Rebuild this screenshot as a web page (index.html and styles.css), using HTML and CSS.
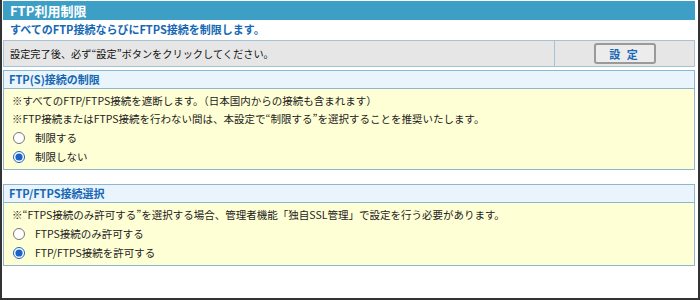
FILE: index.html
```html
<!DOCTYPE html>
<html lang="ja">
<head>
    <meta charset="UTF-8">
    <title>FTP利用制限</title>
    <link rel="stylesheet" href="styles.css">
</head>
<body>
    <div class="frame">
        <div class="page-title">FTP利用制限</div>
        <div class="lead">すべてのFTP接続ならびにFTPS接続を制限します。</div>

        <div class="submit-row">
            <div class="submit-note">設定完了後、必ず“設定”ボタンをクリックしてください。</div>
            <div class="submit-cell">
                <button class="submit-button" type="button">設 定</button>
            </div>
        </div>

        <div class="section">
            <div class="section-title">FTP(S)接続の制限</div>
            <div class="section-body">
                <div class="note">※すべてのFTP/FTPS接続を遮断します。（日本国内からの接続も含まれます）</div>
                <div class="note">※FTP接続またはFTPS接続を行わない間は、本設定で“制限する”を選択することを推奨いたします。</div>
                <label class="choice"><input type="radio" name="limit"> 制限する</label>
                <label class="choice"><input type="radio" name="limit" checked> 制限しない</label>
            </div>
        </div>

        <div class="section section-gap">
            <div class="section-title">FTP/FTPS接続選択</div>
            <div class="section-body">
                <div class="note">※“FTPS接続のみ許可する”を選択する場合、管理者機能「独自SSL管理」で設定を行う必要があります。</div>
                <label class="choice"><input type="radio" name="mode"> FTPS接続のみ許可する</label>
                <label class="choice"><input type="radio" name="mode" checked> FTP/FTPS接続を許可する</label>
            </div>
        </div>
    </div>
</body>
</html>
```

FILE: styles.css
```css
body {
    margin: 0;
    background-color: #ffffff;
    font-family: "Noto Sans CJK JP", "Liberation Sans", sans-serif;
    color: #222222;
}

.frame {
    box-sizing: border-box;
    width: 700px;
    height: 300px;
    border: 2px solid #333333;
    border-top: none;
    padding: 1px 3px 0 1px;
}

.page-title {
    height: 19px;
    line-height: 19px;
    background-color: #3d9fc6;
    color: #ffffff;
    font-size: 13px;
    font-weight: 700;
    padding-left: 7px;
}

.lead {
    height: 19px;
    line-height: 19px;
    color: #1668b4;
    font-size: 11px;
    font-weight: 700;
    padding-left: 7px;
    margin-bottom: 1px;
}

.submit-row {
    display: flex;
    height: 27px;
    background-color: #e6e6e6;
    border: 1px solid #a6c3d3;
    box-sizing: border-box;
}

.submit-note {
    flex: 1;
    display: flex;
    align-items: center;
    padding-left: 6px;
    font-size: 10.2px;
    color: #111111;
    border-right: 1px solid #a6c3d3;
}

.submit-cell {
    width: 139px;
    display: flex;
    align-items: center;
    justify-content: center;
}

.submit-button {
    width: 62px;
    height: 21px;
    padding: 0;
    background-color: #ececec;
    border: 2px solid #9a9a9a;
    border-radius: 3px;
    color: #1668b4;
    font-family: "Noto Sans CJK JP", sans-serif;
    font-size: 11px;
    font-weight: 700;
    letter-spacing: 2px;
}

.section {
    margin-top: 3px;
    border: 1px solid #8db6cf;
}

.section-gap {
    margin-top: 14px;
}

.section-title {
    height: 17px;
    line-height: 17px;
    background-color: #eaf4fc;
    border-bottom: 1px solid #8db6cf;
    color: #1668b4;
    font-size: 11px;
    font-weight: 700;
    padding-left: 5px;
}

.section-body {
    background-color: #ffffd5;
    padding: 3px 0 3px 8px;
}

.note {
    font-size: 10.5px;
    line-height: 18px;
    color: #222222;
}

.choice {
    display: flex;
    align-items: center;
    height: 19px;
    font-size: 10.5px;
    color: #222222;
}

.choice input {
    width: 12px;
    height: 12px;
    margin: 0 10px 0 1px;
    accent-color: #1a63c6;
}
```
